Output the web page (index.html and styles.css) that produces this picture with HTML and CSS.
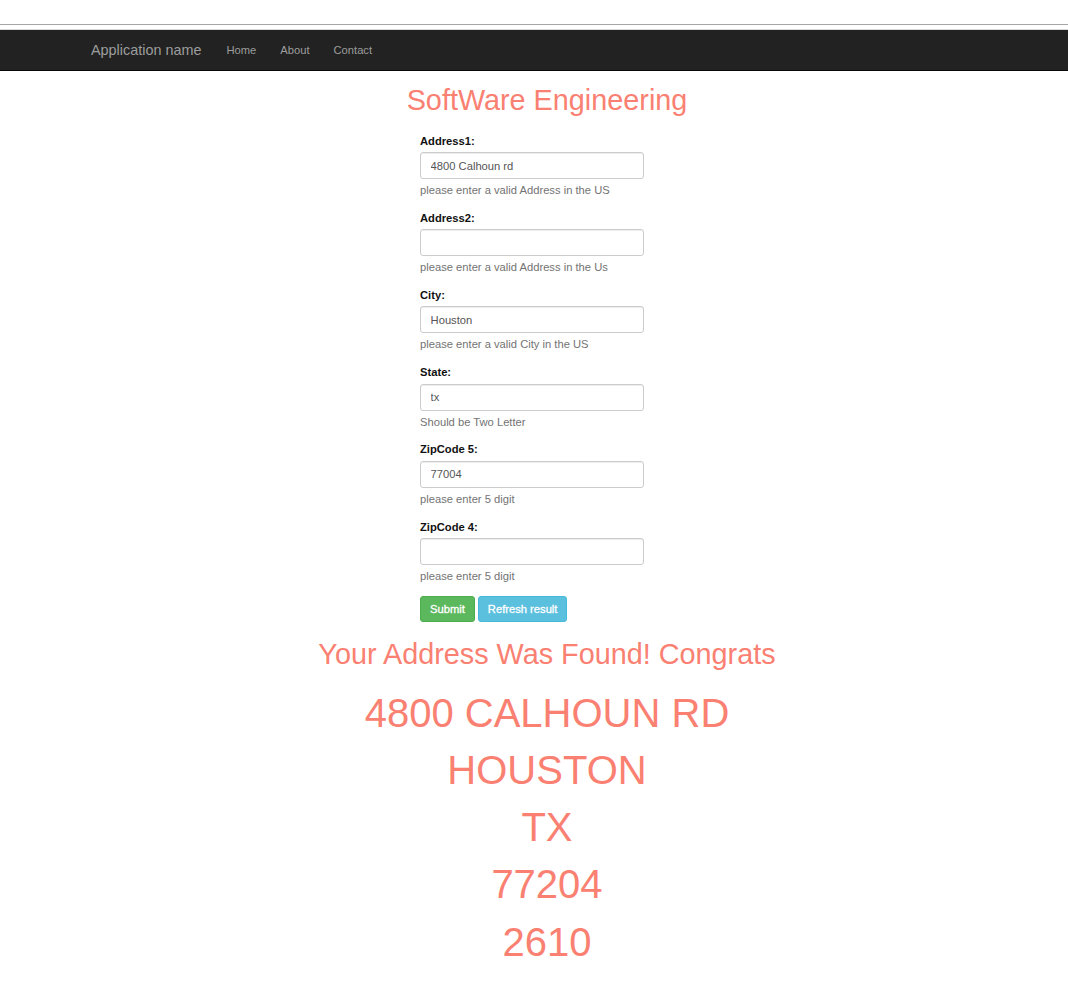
FILE: index.html
```html
<!DOCTYPE html>
<html>
<head>
<meta charset="utf-8">
<title>SoftWare Engineering</title>
<link rel="stylesheet" href="styles.css">
</head>
<body>
<div class="chrome"></div>
<nav class="navbar">
  <div class="nav-inner">
    <a class="brand" href="#">Application name</a>
    <a class="nav-link" href="#">Home</a>
    <a class="nav-link" href="#">About</a>
    <a class="nav-link" href="#">Contact</a>
  </div>
</nav>
<main class="page">
  <h1 class="title">SoftWare Engineering</h1>
  <form class="addr-form">
    <div class="group">
      <label class="lbl">Address1:</label>
      <input class="field" type="text" value="4800 Calhoun rd">
      <div class="help">please enter a valid Address in the US</div>
    </div>
    <div class="group">
      <label class="lbl">Address2:</label>
      <input class="field" type="text" value="">
      <div class="help">please enter a valid Address in the Us</div>
    </div>
    <div class="group">
      <label class="lbl">City:</label>
      <input class="field" type="text" value="Houston">
      <div class="help">please enter a valid City in the US</div>
    </div>
    <div class="group">
      <label class="lbl">State:</label>
      <input class="field" type="text" value="tx">
      <div class="help">Should be Two Letter</div>
    </div>
    <div class="group">
      <label class="lbl">ZipCode 5:</label>
      <input class="field" type="text" value="77004">
      <div class="help">please enter 5 digit</div>
    </div>
    <div class="group">
      <label class="lbl">ZipCode 4:</label>
      <input class="field" type="text" value="">
      <div class="help">please enter 5 digit</div>
    </div>
    <div class="actions">
      <button type="button" class="btn btn-success">Submit</button>
      <button type="button" class="btn btn-info">Refresh result</button>
    </div>
  </form>
  <h1 class="title found">Your Address Was Found! Congrats</h1>
  <div class="result">
    <div class="result-line">4800 CALHOUN RD</div>
    <div class="result-line">HOUSTON</div>
    <div class="result-line">TX</div>
    <div class="result-line">77204</div>
    <div class="result-line">2610</div>
  </div>
</main>
</body>
</html>
```

FILE: styles.css
```css
html, body {
  margin: 0;
  padding: 0;
  background: #fff;
}
body {
  font-family: "Liberation Sans", Arial, sans-serif;
  font-size: 11.2px;
  line-height: 16px;
  color: #333;
}
.chrome {
  height: 24px;
  background: #fff;
  border-bottom: 1px solid #a6a6a6;
  box-sizing: content-box;
}
.navbar {
  margin-top: 4px;
  border-top: 1px solid #d9d9d9;
  background: #222;
  height: 40px;
  border-bottom: 1px solid #080808;
}
.nav-inner {
  width: 936px;
  margin: 0 auto;
  padding-left: 13px;
  box-sizing: border-box;
  height: 40px;
  display: flex;
  align-items: center;
}
.brand {
  color: #9d9d9d;
  font-size: 14.4px;
  line-height: 20px;
  padding: 0 13px 0 12px;
  text-decoration: none;
}
.nav-link {
  color: #9d9d9d;
  font-size: 11.2px;
  line-height: 16px;
  padding: 0 12px;
  text-decoration: none;
}
.page {
  padding-left: 26px;
}
.title {
  color: #fa8072;
  font-weight: normal;
  font-size: 28.8px;
  line-height: 31.7px;
  text-align: center;
  margin: 14px 0 0 0;
}
.addr-form {
  width: 224px;
  margin: 16px 0 0 calc(50% - 127px);
}
.group {
  margin-bottom: 11.8px;
}
.lbl {
  display: block;
  font-weight: bold;
  color: #111;
  line-height: 16px;
  margin-bottom: 3.4px;
}
.field {
  display: block;
  box-sizing: border-box;
  width: 224px;
  height: 27px;
  margin: 0;
  padding: 0 9.6px;
  border: 1px solid #ccc;
  border-radius: 3px;
  box-shadow: inset 0 1px 1px rgba(0,0,0,0.075);
  font-family: "Liberation Sans", Arial, sans-serif;
  font-size: 11.2px;
  color: #555;
  background: #fff;
  outline: none;
}
.help {
  color: #737373;
  margin-top: 3px;
  line-height: 16px;
}
.actions {
  display: flex;
  gap: 3px;
}
.btn {
  box-sizing: border-box;
  height: 26px;
  padding: 4px 9px;
  font-family: "Liberation Sans", Arial, sans-serif;
  font-size: 11.2px;
  line-height: 16px;
  color: #fff;
  border: 1px solid transparent;
  border-radius: 3px;
  -webkit-text-stroke: 0.3px #fff;
  cursor: pointer;
}
.btn-success {
  background: #5cb85c;
  border-color: #4cae4c;
}
.btn-info {
  background: #5bc0de;
  border-color: #46b8da;
}
.found {
  margin-top: 17px;
}
.result {
  margin-top: 14.5px;
  text-align: center;
}
.result-line {
  color: #fa8072;
  font-size: 40px;
  line-height: 57.14px;
}
```
